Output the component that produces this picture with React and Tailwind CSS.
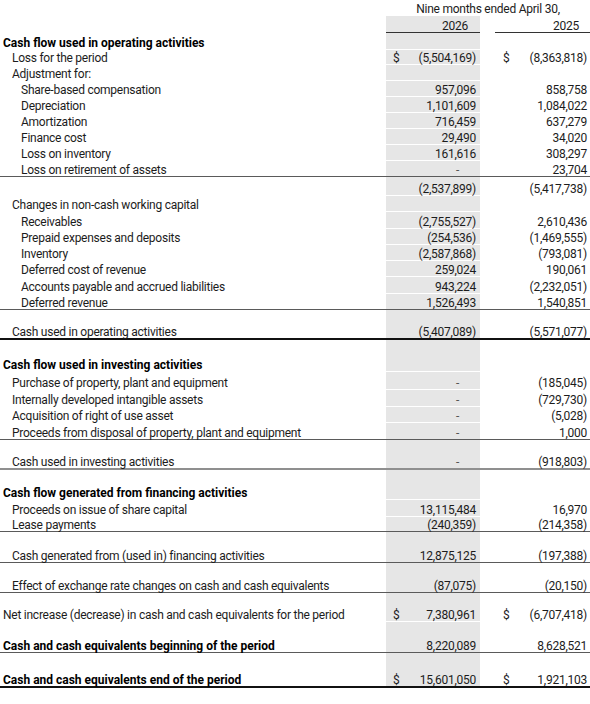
const ROWS = [
  { label: 'Cash flow used in operating activities', bold: true, lvl: 0, h: 'h-[17px]' },
  { label: 'Loss for the period', lvl: 1, a: '(5,504,169)', b: '(8,363,818)', dollar: true, h: 'h-[15px]' },
  { label: 'Adjustment for:', lvl: 1, h: 'h-[16px]' },
  { label: 'Share-based compensation', lvl: 2, a: '957,096', b: '858,758', h: 'h-[16px]' },
  { label: 'Depreciation', lvl: 2, a: '1,101,609', b: '1,084,022', h: 'h-[16px]' },
  { label: 'Amortization', lvl: 2, a: '716,459', b: '637,279', h: 'h-[16px]' },
  { label: 'Finance cost', lvl: 2, a: '29,490', b: '34,020', h: 'h-[16px]' },
  { label: 'Loss on inventory', lvl: 2, a: '161,616', b: '308,297', h: 'h-[16px]' },
  { label: 'Loss on retirement of assets', lvl: 2, a: '-', b: '23,704', h: 'h-[16px]', line: 'thin' },
  { label: '', lvl: 0, a: '(2,537,899)', b: '(5,417,738)', h: 'h-[19px]' },
  { label: 'Changes in non-cash working capital', lvl: 1, h: 'h-[16px]' },
  { label: 'Receivables', lvl: 2, a: '(2,755,527)', b: '2,610,436', h: 'h-[17px]' },
  { label: 'Prepaid expenses and deposits', lvl: 2, a: '(254,536)', b: '(1,469,555)', h: 'h-[16px]' },
  { label: 'Inventory', lvl: 2, a: '(2,587,868)', b: '(793,081)', h: 'h-[16px]' },
  { label: 'Deferred cost of revenue', lvl: 2, a: '259,024', b: '190,061', h: 'h-[16px]' },
  { label: 'Accounts payable and accrued liabilities', lvl: 2, a: '943,224', b: '(2,232,051)', h: 'h-[17px]' },
  { label: 'Deferred revenue', lvl: 2, a: '1,526,493', b: '1,540,851', h: 'h-[16px]', line: 'thin' },
  { label: 'Cash used in operating activities', lvl: 1, a: '(5,407,089)', b: '(5,571,077)', h: 'h-[30px]', line: 'black' },
  { label: 'Cash flow used in investing activities', bold: true, lvl: 0, h: 'h-[32px]' },
  { label: 'Purchase of property, plant and equipment', lvl: 1, a: '-', b: '(185,045)', h: 'h-[18px]' },
  { label: 'Internally developed intangible assets', lvl: 1, a: '-', b: '(729,730)', h: 'h-[17px]' },
  { label: 'Acquisition of right of use asset', lvl: 1, a: '-', b: '(5,028)', h: 'h-[16px]' },
  { label: 'Proceeds from disposal of property, plant and equipment', lvl: 1, a: '-', b: '1,000', h: 'h-[17px]', line: 'thin' },
  { label: 'Cash used in investing activities', lvl: 1, a: '-', b: '(918,803)', h: 'h-[30px]', line: 'grey' },
  { label: 'Cash flow generated from financing activities', bold: true, lvl: 0, h: 'h-[30px]' },
  { label: 'Proceeds on issue of share capital', lvl: 1, a: '13,115,484', b: '16,970', h: 'h-[17px]' },
  { label: 'Lease payments', lvl: 1, a: '(240,359)', b: '(214,358)', h: 'h-[15px]', line: 'thin' },
  { label: 'Cash generated from (used in) financing activities', lvl: 1, a: '12,875,125', b: '(197,388)', h: 'h-[31px]', line: 'thin' },
  { label: 'Effect of exchange rate changes on cash and cash equivalents', lvl: 1, a: '(87,075)', b: '(20,150)', h: 'h-[30px]', line: 'thin' },
  { label: 'Net increase (decrease) in cash and cash equivalents for the period', lvl: 0, a: '7,380,961', b: '(6,707,418)', dollar: true, h: 'h-[29px]' },
  { label: 'Cash and cash equivalents beginning of the period', bold: true, lvl: 0, a: '8,220,089', b: '8,628,521', h: 'h-[31px]', line: 'thin' },
  { label: 'Cash and cash equivalents end of the period', bold: true, lvl: 0, a: '15,601,050', b: '1,921,103', dollar: true, h: 'h-[35px]', line: 'black' },
];

const LINE = {
  none: 'border-b border-transparent',
  thin: 'border-b border-[#5a5a5a]',
  grey: 'border-b-2 border-[#8f8f8f]',
  black: 'border-b-2 border-[#111]',
};

const INDENT = ['pl-[3px]', 'pl-[12px]', 'pl-[21px]'];

function Amount({ value, dollar }) {
  return (
    <>
      <span>{dollar ? '$' : ''}</span>
      {value === '-' ? <span className="pr-[17px] text-[#555]">-</span> : <span>{value}</span>}
    </>
  );
}

function Row({ row }) {
  return (
    <div className={`flex items-stretch ${row.h} ${LINE[row.line || 'none']}`}>
      <div className={`flex-1 flex items-end whitespace-nowrap ${INDENT[row.lvl]} ${row.bold ? 'font-bold text-black tracking-normal' : ''}`}>
        {row.label}
      </div>
      <div className="w-[94px] bg-[#e6e6e6] flex items-end justify-between pl-[7px] pr-[4px]">
        {row.a && <Amount value={row.a} dollar={row.dollar} />}
      </div>
      <div className="w-[15px]" />
      <div className="w-[95px] flex items-end justify-between pl-[8px] pr-[3px]">
        {row.b && <Amount value={row.b} dollar={row.dollar} />}
      </div>
    </div>
  );
}

export default function App() {
  return (
    <div className="w-[590px] h-[704px] bg-white text-[#1c1c1c] text-[12px] leading-[12px] tracking-[-0.25px] font-['Roboto',sans-serif]">
      {/* Column headings */}
      <div className="flex h-[16px]">
        <div className="flex-1" />
        <div className="w-[204px] flex items-end justify-center pb-[1px]">Nine months ended April 30,</div>
      </div>
      <div className="flex h-[17px]">
        <div className="flex-1" />
        <div className="w-[94px] bg-[#e6e6e6] border-b border-[#333] flex items-end justify-end pr-[12px]">2026</div>
        <div className="w-[15px]" />
        <div className="w-[95px] border-b border-[#333] flex items-end justify-end pr-[11px]">2025</div>
      </div>

      {ROWS.map((row, i) => (
        <Row key={i} row={row} />
      ))}
    </div>
  );
}
